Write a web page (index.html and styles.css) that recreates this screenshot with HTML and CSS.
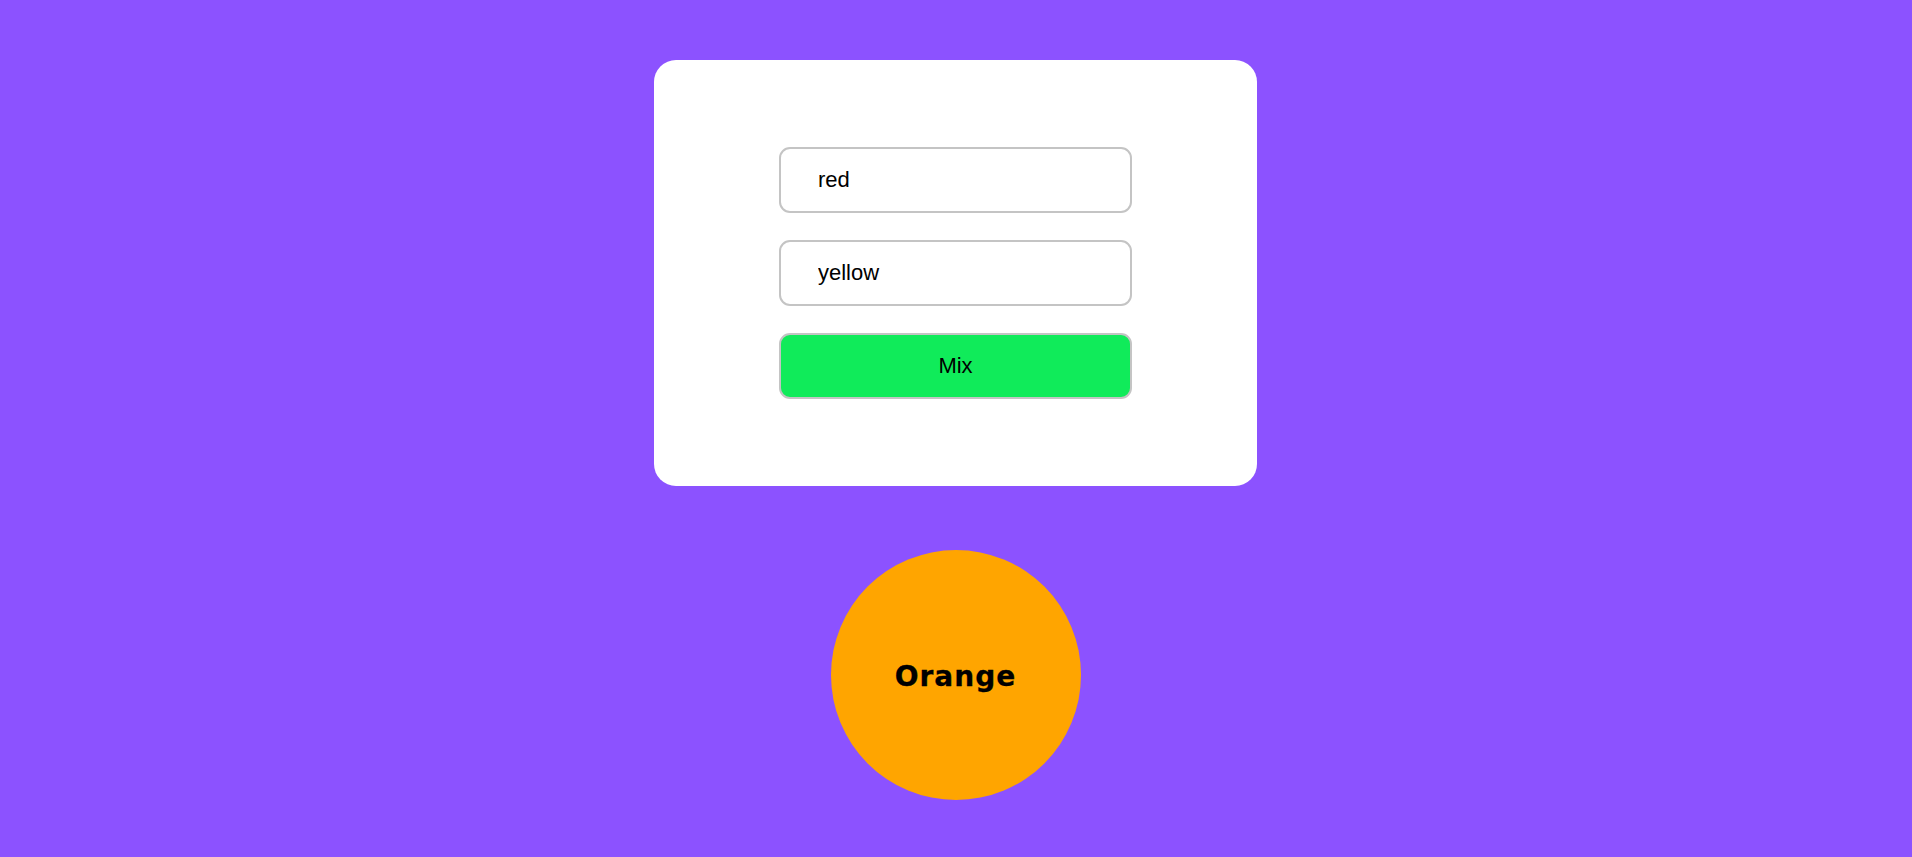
FILE: index.html
```html
<!DOCTYPE html>
<html lang="en">
<head>
<meta charset="utf-8">
<title>Color Mixer</title>
<link rel="stylesheet" href="styles.css">
</head>
<body>
<main class="page">
  <form class="card">
    <input class="field" type="text" value="red">
    <input class="field" type="text" value="yellow">
    <button class="mix" type="button">Mix</button>
  </form>
  <div class="result"><span class="result-label">Orange</span></div>
</main>
</body>
</html>
```
FILE: styles.css
```css
html, body {
  margin: 0;
  padding: 0;
  height: 100%;
}
body {
  background: #8c52ff;
  font-family: "Liberation Sans", Arial, sans-serif;
}
.page {
  display: flex;
  flex-direction: column;
  align-items: center;
  padding-top: 60px;
  padding-right: 1px;
}
.card {
  box-sizing: border-box;
  width: 603px;
  height: 426px;
  background: #ffffff;
  border-radius: 22px;
  padding: 87px 125px;
  display: flex;
  flex-direction: column;
  gap: 27px;
  margin: 0;
}
.field {
  box-sizing: border-box;
  width: 353px;
  height: 66px;
  margin: 0;
  border: 2px solid #c4c4c4;
  border-radius: 11px;
  padding: 0 37px;
  font-family: "Liberation Sans", Arial, sans-serif;
  font-size: 22px;
  color: #000000;
  background: #ffffff;
  outline: none;
}
.mix {
  box-sizing: border-box;
  width: 353px;
  height: 66px;
  margin: 0;
  border: 2px solid #c4c4c4;
  border-radius: 11px;
  background: #10eb5a;
  font-family: "Liberation Sans", Arial, sans-serif;
  font-size: 22px;
  color: #000000;
  cursor: pointer;
}
.result {
  margin-top: 64px;
  width: 250px;
  height: 250px;
  border-radius: 50%;
  background: #ffa500;
  display: flex;
  align-items: center;
  justify-content: center;
}
.result-label {
  font-family: "DejaVu Sans", "Liberation Sans", sans-serif;
  font-weight: 700;
  font-size: 28px;
  letter-spacing: 1px;
  padding-top: 2px;
  color: #000000;
  -webkit-text-stroke: 0.3px #000000;
}
```
